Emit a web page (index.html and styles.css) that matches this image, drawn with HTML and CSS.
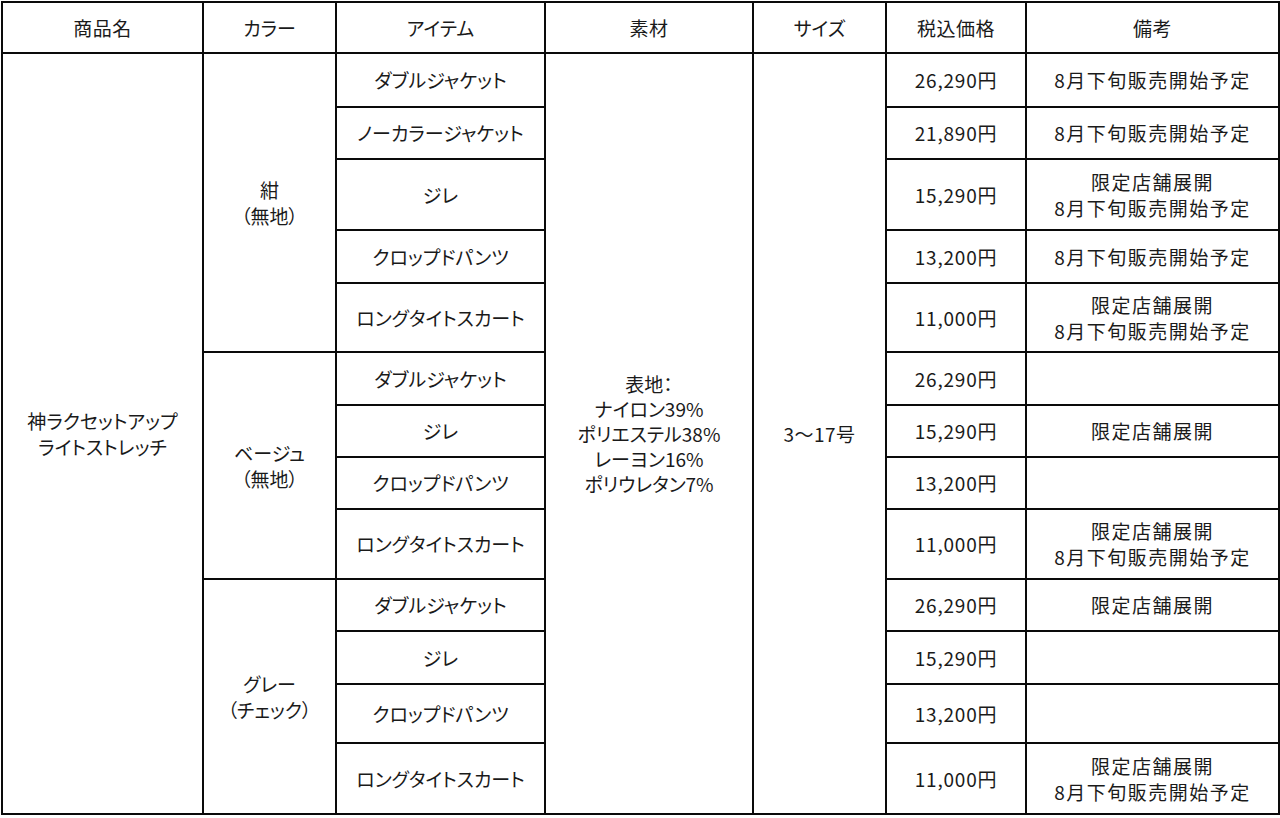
FILE: index.html
```html
<!DOCTYPE html>
<html lang="ja">
<head>
<meta charset="utf-8">
<title>神ラクセットアップ ライトストレッチ</title>
<link rel="stylesheet" href="styles.css">
</head>
<body>
<table class="spec">
  <colgroup>
    <col class="c-name"><col class="c-color"><col class="c-item"><col class="c-mat"><col class="c-size"><col class="c-price"><col class="c-note">
  </colgroup>
  <thead>
    <tr class="r-head">
      <th>商品名</th><th class="kana">カラー</th><th class="kana">アイテム</th><th>素材</th><th class="kana">サイズ</th><th>税込価格</th><th>備考</th>
    </tr>
  </thead>
  <tbody>
    <tr class="r1">
      <td rowspan="13" class="kana">神ラクセットアップ<br>ライトストレッチ</td>
      <td rowspan="5" class="kana">紺<br>（無地）</td>
      <td class="kana">ダブルジャケット</td>
      <td rowspan="13" class="kana mat">表地：<br>ナイロン39%<br>ポリエステル38%<br>レーヨン16%<br>ポリウレタン7%</td>
      <td rowspan="13">3～17号</td>
      <td class="price">26,290円</td><td class="note">8月下旬販売開始予定</td>
    </tr>
    <tr class="r2"><td class="kana">ノーカラージャケット</td><td class="price">21,890円</td><td class="note">8月下旬販売開始予定</td></tr>
    <tr class="r3"><td class="kana">ジレ</td><td class="price">15,290円</td><td class="note">限定店舗展開<br>8月下旬販売開始予定</td></tr>
    <tr class="r4"><td class="kana">クロップドパンツ</td><td class="price">13,200円</td><td class="note">8月下旬販売開始予定</td></tr>
    <tr class="r5"><td class="kana">ロングタイトスカート</td><td class="price">11,000円</td><td class="note">限定店舗展開<br>8月下旬販売開始予定</td></tr>
    <tr class="r6">
      <td rowspan="4" class="kana">ベージュ<br>（無地）</td>
      <td class="kana">ダブルジャケット</td><td class="price">26,290円</td><td class="note"></td>
    </tr>
    <tr class="r7"><td class="kana">ジレ</td><td class="price">15,290円</td><td class="note">限定店舗展開</td></tr>
    <tr class="r8"><td class="kana">クロップドパンツ</td><td class="price">13,200円</td><td class="note"></td></tr>
    <tr class="r9"><td class="kana">ロングタイトスカート</td><td class="price">11,000円</td><td class="note">限定店舗展開<br>8月下旬販売開始予定</td></tr>
    <tr class="r10">
      <td rowspan="4" class="kana">グレー<br>（チェック）</td>
      <td class="kana">ダブルジャケット</td><td class="price">26,290円</td><td class="note">限定店舗展開</td>
    </tr>
    <tr class="r11"><td class="kana">ジレ</td><td class="price">15,290円</td><td class="note"></td></tr>
    <tr class="r12"><td class="kana">クロップドパンツ</td><td class="price">13,200円</td><td class="note"></td></tr>
    <tr class="r13"><td class="kana">ロングタイトスカート</td><td class="price">11,000円</td><td class="note">限定店舗展開<br>8月下旬販売開始予定</td></tr>
  </tbody>
</table>
</body>
</html>
```

FILE: styles.css
```css
html, body {
  margin: 0;
  padding: 0;
  background: #ffffff;
}

body {
  padding: 1px 0 0 1px;
  font-family: "Noto Sans CJK JP", "Noto Sans", sans-serif;
  color: #1a1a1a;
}

.spec {
  border-collapse: collapse;
  table-layout: fixed;
  width: 1277px;
  font-size: 19px;
  line-height: 26px;
}

.spec th,
.spec td {
  border: 2px solid #0a0a0a;
  padding: 0;
  text-align: center;
  vertical-align: middle;
  font-weight: 400;
  white-space: nowrap;
  letter-spacing: 0.5px;
}

.spec .kana {
  font-feature-settings: "palt" 1;
  letter-spacing: 0;
}

.spec .price {
  letter-spacing: 0.8px;
}

.spec .note {
  letter-spacing: 1.5px;
}

.spec .mat {
  line-height: 25px;
}

.c-name { width: 201px; }
.c-color { width: 133px; }
.c-item { width: 209px; }
.c-mat { width: 208px; }
.c-size { width: 133px; }
.c-price { width: 140px; }
.c-note { width: 253px; }

.r-head { height: 51px; }
.r1 { height: 54px; }
.r2 { height: 52px; }
.r3 { height: 71px; }
.r4 { height: 53px; }
.r5 { height: 69px; }
.r6 { height: 53px; }
.r7 { height: 52px; }
.r8 { height: 52px; }
.r9 { height: 70px; }
.r10 { height: 52px; }
.r11 { height: 53px; }
.r12 { height: 59px; }
.r13 { height: 71px; }
```
